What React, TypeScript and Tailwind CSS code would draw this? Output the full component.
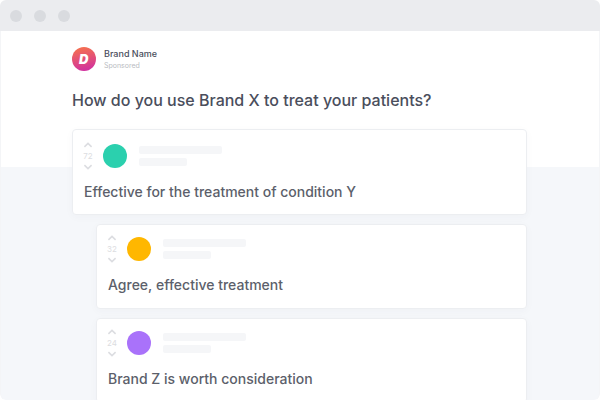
interface Comment {
  votes: number;
  color: string;
  text: string;
  reply: boolean;
}

const comments: Comment[] = [
  { votes: 72, color: "bg-[#2bd0ae]", text: "Effective for the treatment of condition Y", reply: false },
  { votes: 32, color: "bg-[#ffb700]", text: "Agree, effective treatment", reply: true },
  { votes: 24, color: "bg-[#a972fa]", text: "Brand Z is worth consideration", reply: true },
];

function WindowBar() {
  return (
    <header className="flex h-[31px] shrink-0 items-center gap-3 bg-[#ebecef] px-2.5">
      <span className="size-3 rounded-full bg-[#d9dbdf]" />
      <span className="size-3 rounded-full bg-[#d9dbdf]" />
      <span className="size-3 rounded-full bg-[#d9dbdf]" />
    </header>
  );
}

function Chevron({ up = false }: { up?: boolean }) {
  return (
    <svg className="h-1.5 w-2.5" viewBox="0 0 10 6" fill="none" stroke="currentColor" strokeWidth="1.6" aria-hidden="true">
      <path d={up ? "M1.4 4.8 5 1.4l3.6 3.4" : "M1.4 1.2 5 4.6l3.6-3.4"} />
    </svg>
  );
}

function Votes({ count }: { count: number }) {
  return (
    <div className="flex h-7 w-2 flex-col items-center justify-between text-[#dcdde1]">
      <button type="button" aria-label="Upvote">
        <Chevron up />
      </button>
      <span className="text-[8px] leading-3">{count}</span>
      <button type="button" aria-label="Downvote">
        <Chevron />
      </button>
    </div>
  );
}

function CommentCard({ comment }: { comment: Comment }) {
  return (
    <article
      className={`shrink-0 rounded border border-[#eceef1] bg-white shadow-[0_2px_8px_rgba(60,70,90,0.03)] ${
        comment.reply ? "ml-6 px-[11px] pt-[10px] pb-[11px]" : "px-[11px] pt-3 pb-[10px]"
      }`}
    >
      <div className="flex items-center">
        <Votes count={comment.votes} />
        <span className={`ml-[11px] size-6 rounded-full ${comment.color}`} />
        <div className="ml-3 flex flex-col gap-1">
          <span className="h-2 w-[83px] rounded-xs bg-[#f5f6f8]" />
          <span className="h-2 w-12 rounded-xs bg-[#f5f6f8]" />
        </div>
      </div>
      <p className="mt-[10px] text-[14px] leading-6 font-medium text-[#5c5f6b]">{comment.text}</p>
    </article>
  );
}

export default function App() {
  return (
    <div className="flex h-screen flex-col overflow-hidden rounded-md font-['Inter',sans-serif]">
      <WindowBar />
      <main className="min-h-0 flex-1 overflow-hidden rounded-b-md border-x border-[#f4f5f7] bg-[linear-gradient(#ffffff_136px,#f5f7fa_136px)] pt-4 pr-[72px] pl-[71px]">
        <div className="flex items-start gap-2">
          <svg className="size-6" viewBox="0 0 24 24" aria-hidden="true">
            <defs>
              <linearGradient id="brand" x1="0.4" y1="0" x2="0.6" y2="1">
                <stop offset="0" stopColor="#f57050" />
                <stop offset="1" stopColor="#d02fa0" />
              </linearGradient>
            </defs>
            <circle cx="12" cy="12" r="12" fill="url(#brand)" />
            <text x="11.8" y="16.6" textAnchor="middle" fontSize="13" fontWeight="900" fontStyle="italic" fill="#ffffff">
              D
            </text>
          </svg>
          <div className="pt-px">
            <div className="text-[9px] leading-3 font-medium text-[#4a4e5c]">Brand Name</div>
            <div className="text-[7px] leading-3 text-[#b9bbc1]">Sponsored</div>
          </div>
        </div>
        <h1 className="mt-4 text-[16px] leading-6 font-medium text-[#4a4e5c]">
          How do you use Brand X to treat your patients?
        </h1>
        <section className="mt-[17px] flex flex-col gap-[9px]">
          {comments.map((comment) => (
            <CommentCard key={comment.text} comment={comment} />
          ))}
        </section>
      </main>
    </div>
  );
}
